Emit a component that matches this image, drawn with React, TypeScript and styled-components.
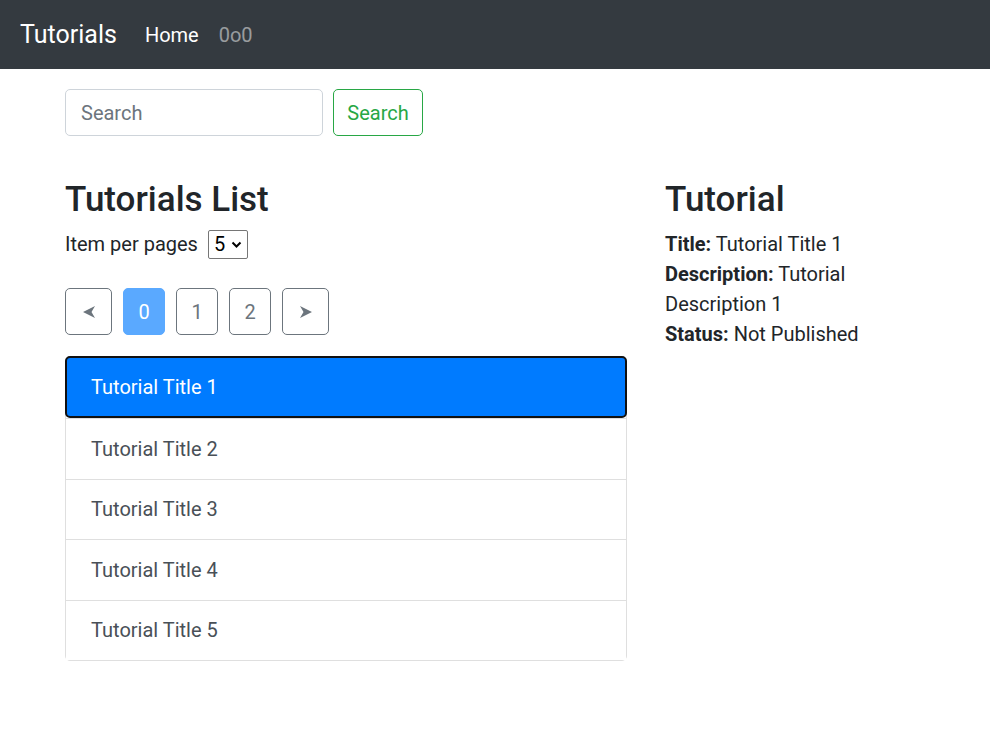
import React, { useState } from "react";
import styled, { createGlobalStyle } from "styled-components";

const GlobalStyle = createGlobalStyle`
  * { box-sizing: border-box; }
  body {
    margin: 0;
    font-family: Roboto, "Noto Sans", "Liberation Sans", sans-serif;
    font-size: 20px;
    line-height: 1.5;
    color: #212529;
    background: #fff;
  }
`;

const NavBar = styled.nav`
  display: flex;
  align-items: center;
  height: 69px;
  padding: 0 20px;
  background: #343a40;
`;

const Brand = styled.a`
  margin-right: 18px;
  font-size: 25px;
  color: #fff;
  text-decoration: none;
`;

const NavLink = styled.a<{ $active?: boolean }>`
  padding: 0 10px;
  font-size: 20px;
  color: ${(p) => (p.$active ? "#fff" : "rgba(255, 255, 255, 0.5)")};
  text-decoration: none;
`;

const Container = styled.main`
  width: 900px;
  margin: 20px auto 0;
  padding: 0 20px;
`;

const SearchRow = styled.div`
  display: flex;
  gap: 10px;
`;

const SearchInput = styled.input`
  width: 258px;
  height: 47px;
  padding: 0 15px;
  border: 1px solid #ced4da;
  border-radius: 5px;
  font: inherit;
  color: #495057;
  &::placeholder {
    color: #6c757d;
  }
`;

const OutlineButton = styled.button`
  width: 90px;
  height: 47px;
  padding: 0;
  border: 1px solid #28a745;
  border-radius: 5px;
  background: #fff;
  font: inherit;
  color: #28a745;
`;

const Columns = styled.div`
  display: grid;
  grid-template-columns: 562px 240px;
  column-gap: 38px;
  margin-top: 43px;
`;

const Heading = styled.h4`
  margin: 0 0 8px;
  font-size: 35px;
  font-weight: 500;
  line-height: 1.2;
`;

const PerPage = styled.div`
  display: flex;
  align-items: center;
  gap: 10px;
`;

const SelectBox = styled.label`
  position: relative;
  display: flex;
  align-items: center;
  width: 40px;
  height: 29px;
  border: 1px solid #767676;
  border-radius: 2px;
  background: #fff;
`;

const Select = styled.select`
  appearance: none;
  width: 100%;
  height: 100%;
  padding: 0 0 0 5px;
  border: none;
  background: transparent;
  font-family: inherit;
  font-size: 20px;
  line-height: 1;
  color: #000;
  outline: none;
`;

const Chevron = styled.svg`
  position: absolute;
  right: 5px;
  top: 10px;
  pointer-events: none;
`;

const Pager = styled.div`
  display: flex;
  gap: 11px;
  margin: 29px 0 21px;
`;

const PageItem = styled.button<{ $selected?: boolean; $wide?: boolean }>`
  display: flex;
  align-items: center;
  justify-content: center;
  width: ${(p) => (p.$wide ? "47px" : "42px")};
  height: 47px;
  padding: 0;
  border: 1px solid ${(p) => (p.$selected ? "#5aa9ff" : "#6c757d")};
  border-radius: 5px;
  background: ${(p) => (p.$selected ? "#5aa9ff" : "#fff")};
  font: inherit;
  color: ${(p) => (p.$selected ? "#fff" : "#6c757d")};
`;

const ListGroup = styled.ul`
  margin: 0;
  padding: 0;
  list-style: none;
  border: 1px solid #dfdfdf;
  border-radius: 5px;
`;

const ListItem = styled.li<{ $active?: boolean }>`
  display: flex;
  align-items: center;
  height: 60.5px;
  padding: 0 25px;
  border-top: 1px solid #dfdfdf;
  color: ${(p) => (p.$active ? "#fff" : "#495057")};
  background: ${(p) => (p.$active ? "#007bff" : "#fff")};
  &:first-child {
    border-top: none;
  }
  ${(p) =>
    p.$active &&
    `
    height: 62px;
    margin: -1px -1px 0;
    padding: 0 24px;
    border: 2px solid #111 !important;
    border-radius: 5px;
  `}
`;

const Details = styled.div``;

const Line = styled.div``;

const Label = styled.strong`
  font-weight: 700;
`;

const Arrow = ({ dir }: { dir: "left" | "right" }) => (
  <svg
    width="14"
    height="14"
    viewBox="0 0 14 14"
    style={{ transform: dir === "right" ? "scaleX(-1)" : undefined }}
  >
    <path d="M1 7 L13 1 L9.5 7 L13 13 Z" fill="#6c757d" />
  </svg>
);

const tutorials = [
  "Tutorial Title 1",
  "Tutorial Title 2",
  "Tutorial Title 3",
  "Tutorial Title 4",
  "Tutorial Title 5",
];

export default function App() {
  const [active, setActive] = useState(0);
  const [page, setPage] = useState(0);

  return (
    <>
      <GlobalStyle />
      <NavBar>
        <Brand href="#">Tutorials</Brand>
        <NavLink href="#" $active>
          Home
        </NavLink>
        <NavLink href="#">0o0</NavLink>
      </NavBar>
      <Container>
        <SearchRow>
          <SearchInput placeholder="Search" />
          <OutlineButton>Search</OutlineButton>
        </SearchRow>
        <Columns>
          <div>
            <Heading>Tutorials List</Heading>
            <PerPage>
              Item per pages
              <SelectBox>
                <Select defaultValue="5">
                  <option>3</option>
                  <option>5</option>
                  <option>10</option>
                </Select>
                <Chevron width="11" height="8" viewBox="0 0 11 8">
                  <path d="M1.5 1.5 L5.5 5.5 L9.5 1.5" fill="none" stroke="#000" strokeWidth="2" />
                </Chevron>
              </SelectBox>
            </PerPage>
            <Pager>
              <PageItem $wide>
                <Arrow dir="left" />
              </PageItem>
              {[0, 1, 2].map((n) => (
                <PageItem key={n} $selected={page === n} onClick={() => setPage(n)}>
                  {n}
                </PageItem>
              ))}
              <PageItem $wide>
                <Arrow dir="right" />
              </PageItem>
            </Pager>
            <ListGroup>
              {tutorials.map((t, i) => (
                <ListItem key={t} $active={active === i} onClick={() => setActive(i)}>
                  {t}
                </ListItem>
              ))}
            </ListGroup>
          </div>
          <Details>
            <Heading>Tutorial</Heading>
            <Line>
              <Label>Title:</Label> Tutorial Title 1
            </Line>
            <Line>
              <Label>Description:</Label> Tutorial Description 1
            </Line>
            <Line>
              <Label>Status:</Label> Not Published
            </Line>
          </Details>
        </Columns>
      </Container>
    </>
  );
}
